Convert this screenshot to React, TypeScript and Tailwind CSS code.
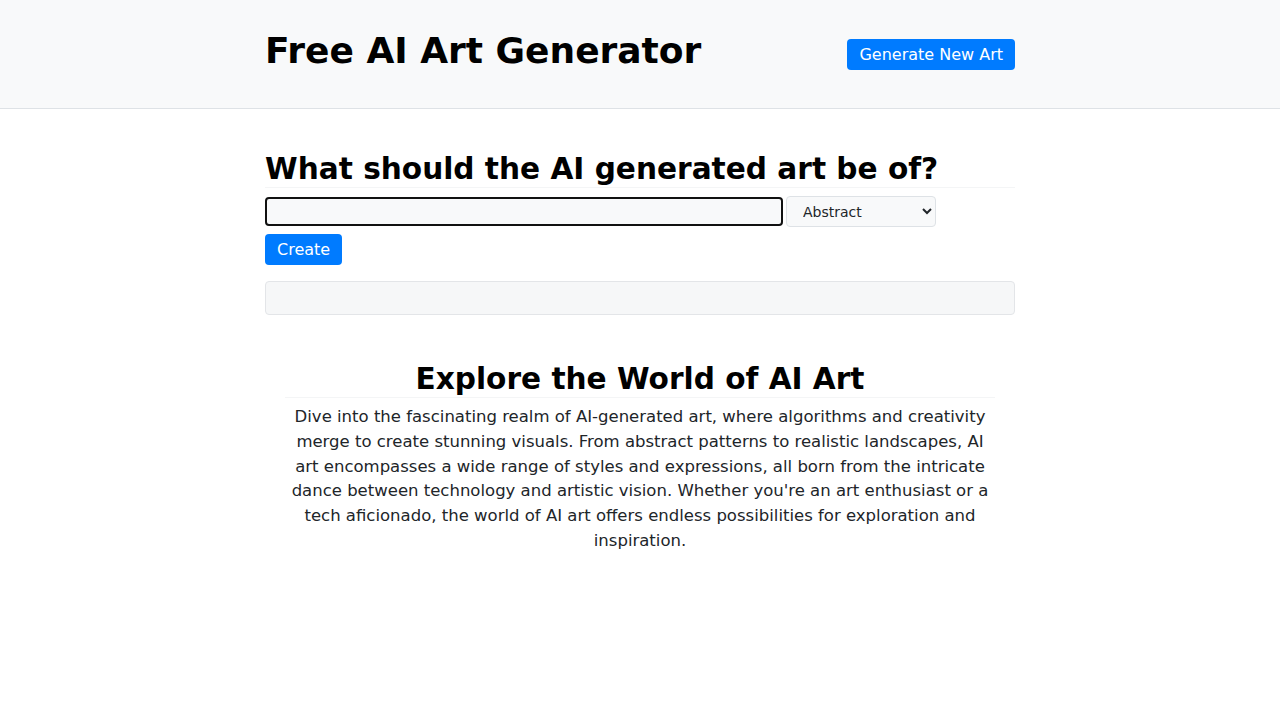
import React from "react";

export default function App() {
  const font = { fontFamily: '"DejaVu Sans", sans-serif' };
  return (
    <div className="min-h-screen bg-white text-black" style={font}>
      <header className="h-[109px] bg-[#f8f9fa] border-b border-[#dee2e6]">
        <div className="w-[750px] mx-auto flex justify-between items-start pt-[29px]">
          <h1 className="text-[36px] font-bold leading-[1.2] m-0">Free AI Art Generator</h1>
          <button className="mt-[10px] h-[31px] px-3 bg-[#007bff] text-white text-[16px] leading-none rounded-[4px]">
            Generate New Art
          </button>
        </div>
      </header>

      <main className="w-[750px] mx-auto">
        <h2 className="mt-[42px] text-[29.6px] font-bold leading-[36px] border-b border-[#f4f5f6]">
          What should the AI generated art be of?
        </h2>
        <div className="mt-[8px] flex items-center gap-[3px] h-[31px]">
          <input
            type="text"
            className="w-[518px] h-[29px] border-2 border-[#111] rounded-[4px] bg-[#f8f9fa] px-2 outline-none"
          />
          <select className="w-[150px] h-[31px] bg-[#f8f9fa] border border-[#dee2e6] rounded-[4px] pl-[12px] pr-2 text-[14px] text-[#212529]">
            <option>Abstract</option>
            <option>Realistic</option>
            <option>Surreal</option>
          </select>
        </div>
        <button className="mt-[7px] h-[31px] px-3 bg-[#007bff] text-white text-[16px] leading-none rounded-[4px]">
          Create
        </button>
        <div className="mt-[16px] h-[34px] bg-[#f6f7f8] border border-[#e3e5e8] rounded-[4px]"></div>

        <section className="mt-[46px] w-[710px] mx-auto text-center">
          <h2 className="text-[29.6px] font-bold leading-[36px] border-b border-[#f4f5f6]">
            Explore the World of AI Art
          </h2>
          <p className="mt-[7px] text-[16.5px] leading-[1.5] text-[#212529] px-[4px]">
            Dive into the fascinating realm of AI-generated art, where algorithms and creativity merge to create
            stunning visuals. From abstract patterns to realistic landscapes, AI art encompasses a wide range of
            styles and expressions, all born from the intricate dance between technology and artistic vision.
            Whether you're an art enthusiast or a tech aficionado, the world of AI art offers endless possibilities
            for exploration and inspiration.
          </p>
        </section>
      </main>
    </div>
  );
}
